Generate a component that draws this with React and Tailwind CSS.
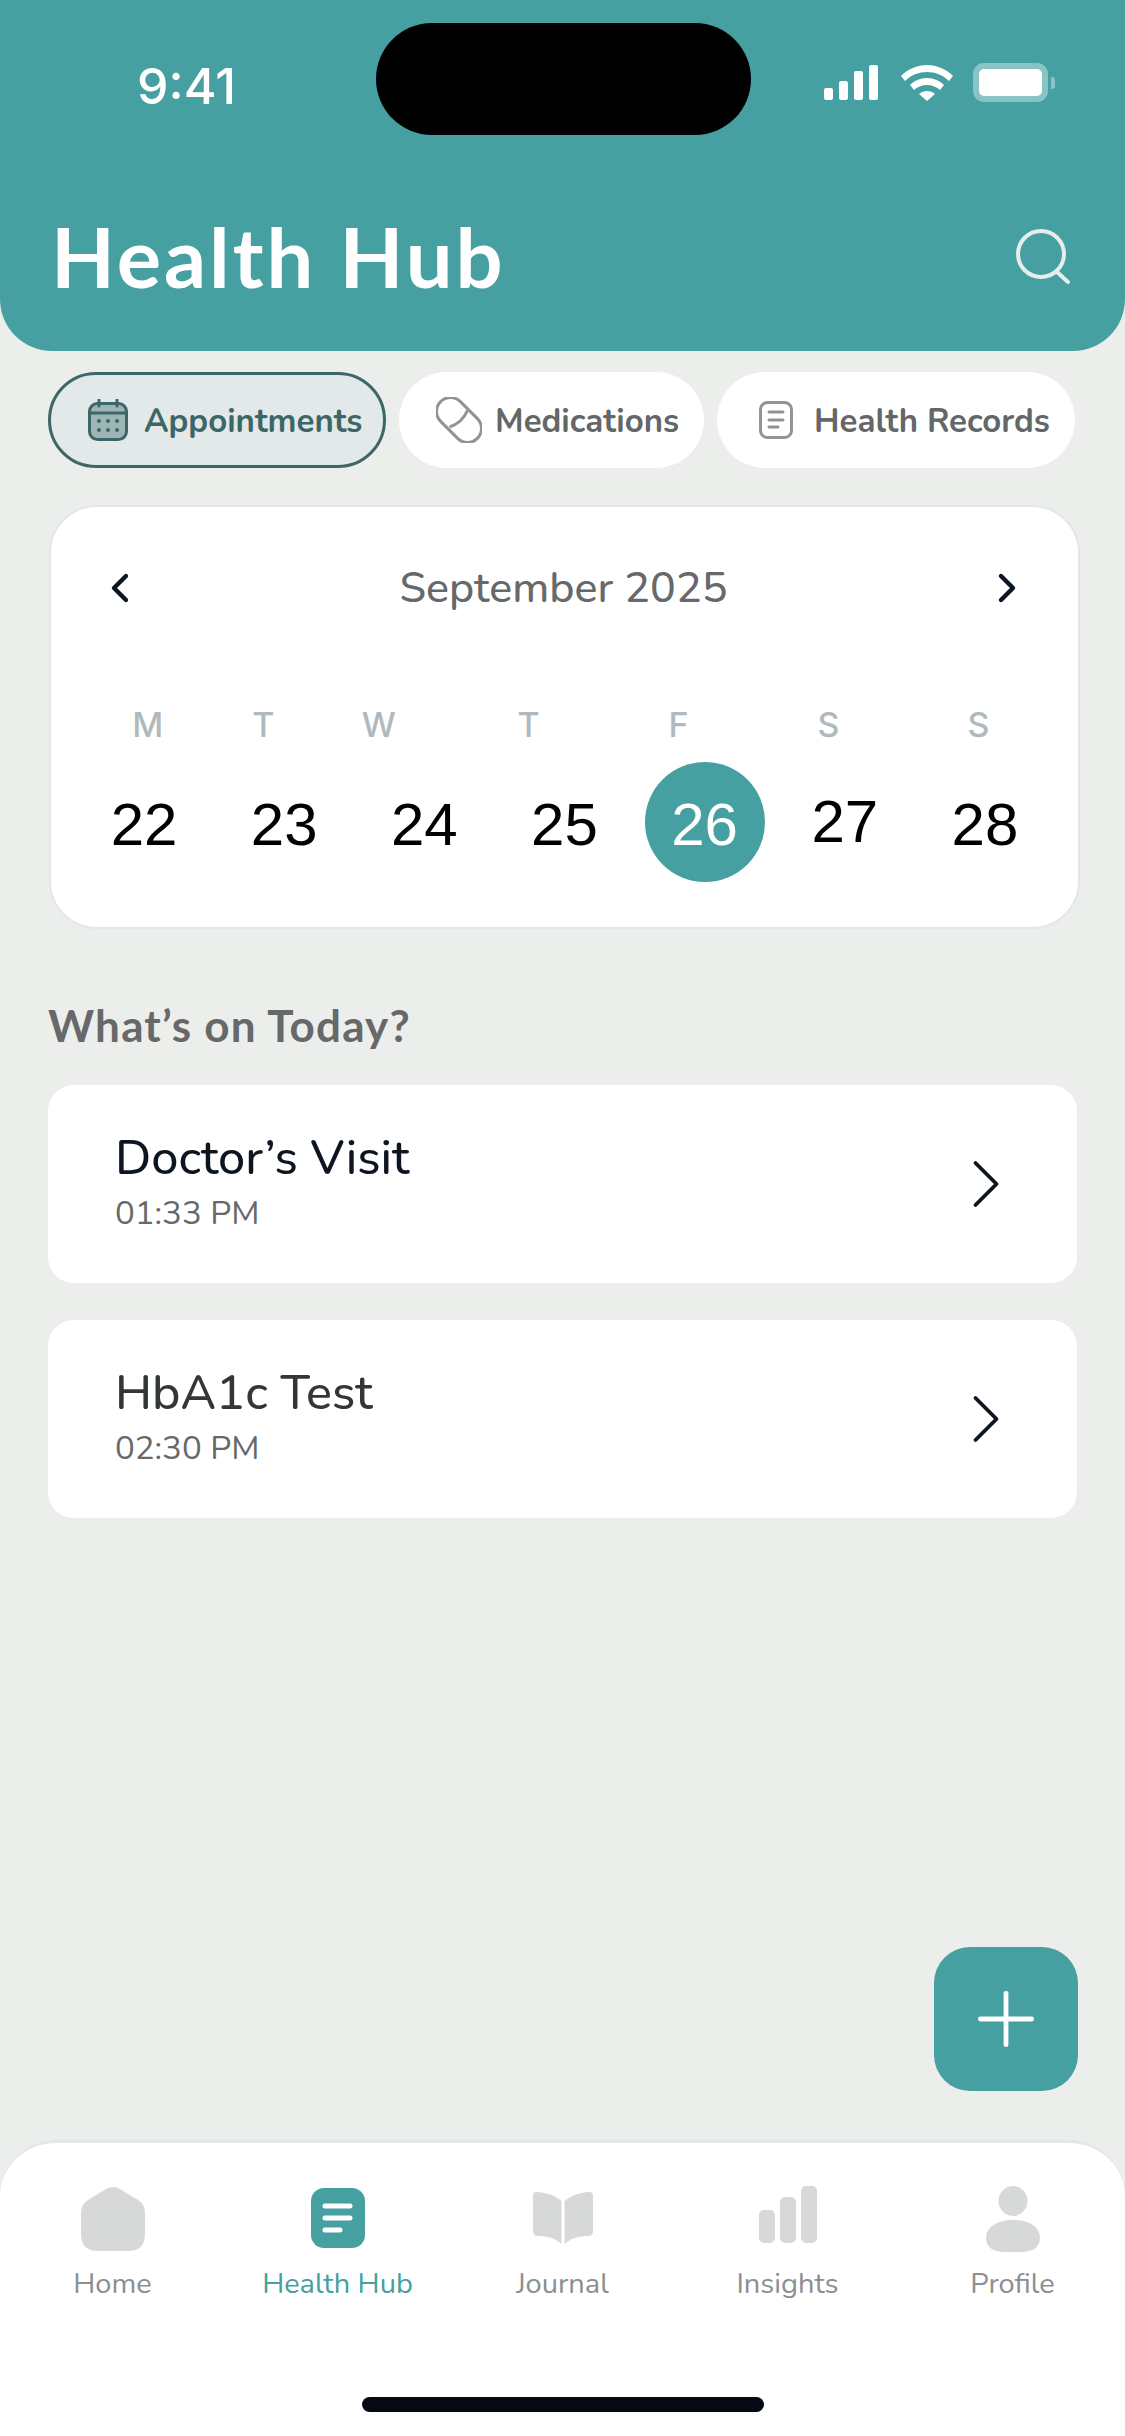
import { ChevronLeft, ChevronRight, Plus } from 'lucide-react';

const NUNITO = "font-['Nunito','Lato','Noto_Sans',sans-serif]";

const tabs = [
  { label: 'Appointments', icon: CalendarIcon, active: true, cls: 'w-[338px] pl-[37px] gap-[16px]' },
  { label: 'Medications', icon: PillIcon, cls: 'w-[305px] pl-[37px] gap-[13px]' },
  { label: 'Health Records', icon: RecordIcon, cls: 'w-[358px] pl-[42px] gap-[21px]' },
];

const dates = [22, 23, 24, 25, 26, 27, 28];

const visits = [
  { title: 'Doctor’s Visit', time: '01:33 PM', color: 'text-[#0d1620]' },
  { title: 'HbA1c Test', time: '02:30 PM', color: 'text-[#333637]' },
];

const nav = [
  { label: 'Home', icon: HomeIcon },
  { label: 'Health Hub', icon: HubIcon, active: true },
  { label: 'Journal', icon: BookIcon },
  { label: 'Insights', icon: BarsIcon },
  { label: 'Profile', icon: UserIcon },
];

function CalendarIcon() {
  return (
    <svg width="40" height="42" viewBox="0 0 40 42" fill="none">
      <rect x="1.5" y="4.5" width="37" height="36" rx="8" fill="#9db5b5" stroke="#3d6767" strokeWidth="3" />
      <path d="M2 14h36" stroke="#3d6767" strokeWidth="3" />
      <path d="M11 1v6M29 1v6" stroke="#3d6767" strokeWidth="3" strokeLinecap="round" />
      <g fill="#3d6767">
        <circle cx="11" cy="22" r="2" /><circle cx="20" cy="22" r="2" /><circle cx="29" cy="22" r="2" />
        <circle cx="11" cy="31" r="2" /><circle cx="20" cy="31" r="2" /><circle cx="29" cy="31" r="2" />
      </g>
    </svg>
  );
}

function PillIcon() {
  return (
    <svg width="46" height="46" viewBox="0 0 46 46" fill="none" stroke="#8f9496" strokeWidth="3">
      <rect x="-3" y="9" width="52" height="28" rx="14" transform="rotate(45 23 23)" />
      <path d="M13.5 30Q26 26 31.5 13.5" />
    </svg>
  );
}

function RecordIcon() {
  return (
    <svg width="34" height="38" viewBox="0 0 34 38" fill="none" stroke="#8f9496" strokeWidth="3" strokeLinecap="round">
      <rect x="1.5" y="1.5" width="31" height="35" rx="7" />
      <path d="M10 11h14M10 19h14M10 26h9" />
    </svg>
  );
}

function HomeIcon() {
  return (
    <svg width="66" height="66" viewBox="0 0 66 66" fill="#d7d9d9">
      <path d="M26 3 Q33 -1 40 3 L58 14 Q65 18 65 27 V48 Q65 65 48 65 H18 Q1 65 1 48 V27 Q1 18 8 14 Z" />
    </svg>
  );
}

function HubIcon() {
  return (
    <svg className="mt-[2px]" width="54" height="60" viewBox="0 0 54 60">
      <rect width="54" height="60" rx="13" fill="#469fa1" />
      <path d="M14 18h25M14 30h25M14 42h15" stroke="#fff" strokeWidth="5" strokeLinecap="round" />
    </svg>
  );
}

function BookIcon() {
  return (
    <svg className="mt-[5px]" width="60" height="54" viewBox="0 0 60 54" fill="#d7d9d9">
      <path d="M28.5 10 V53 C22 47 14 45 5 45 Q0 45 0 40 V5 Q0 0 5 1 C15 2 23 5 28.5 10 Z" />
      <path d="M31.5 10 V53 C38 47 46 45 55 45 Q60 45 60 40 V5 Q60 0 55 1 C45 2 37 5 31.5 10 Z" />
    </svg>
  );
}

function BarsIcon() {
  return (
    <svg width="58" height="57" viewBox="0 0 58 57" fill="#d7d9d9">
      <rect x="0" y="24" width="16" height="33" rx="5" />
      <rect x="21" y="11" width="16" height="46" rx="5" />
      <rect x="42" y="0" width="16" height="57" rx="5" />
    </svg>
  );
}

function UserIcon() {
  return (
    <svg width="54" height="66" viewBox="0 0 54 66" fill="#d7d9d9">
      <ellipse cx="27" cy="15" rx="14.5" ry="15" />
      <path d="M27 34 C43 34 54 41 54 52 C54 61 47 66 35 66 H19 C7 66 0 61 0 52 C0 41 11 34 27 34 Z" />
    </svg>
  );
}

function StatusBar() {
  return (
    <div className="relative h-[135px] shrink-0">
      <div className="absolute left-[376px] top-[23px] h-[112px] w-[375px] rounded-[56px] bg-black" />
      <div className="flex h-full items-start justify-between pl-[137px] pr-[70px] pt-[57px]">
        <span className="font-['Inter',sans-serif] text-[50px] font-medium leading-[58px] text-white">9:41</span>
        <div className="flex items-center gap-[20px] pt-[6px]">
          <div className="flex items-center gap-[23px]">
            <div className="flex h-[35px] items-end gap-[6px]">
              <div className="h-[12px] w-[9px] rounded-[2px] bg-white" />
              <div className="h-[19px] w-[9px] rounded-[2px] bg-white" />
              <div className="h-[29px] w-[9px] rounded-[2px] bg-white" />
              <div className="h-[35px] w-[9px] rounded-[2px] bg-white" />
            </div>
            <svg width="52" height="36" viewBox="0 0 52 36" fill="#fff">
              <path d="M26 0C16 0 7 4 0 11l4 5c6-6 14-9 22-9s16 3 22 9l4-5C45 4 36 0 26 0Z" />
              <path d="M26 13c-7 0-13 3-17 7l4 5c3-3 8-5 13-5s10 2 13 5l4-5c-4-4-10-7-17-7Z" />
              <path d="M26 26c-3 0-6 1-8 3l8 7 8-7c-2-2-5-3-8-3Z" />
            </svg>
          </div>
          <div className="flex items-center gap-[3px]">
            <div className="h-[39px] w-[75px] rounded-[11px] border-[6px] border-[#8ac3c4] bg-white" />
            <div className="h-[12px] w-[4px] rounded-r-[3px] bg-[#8ac3c4]" />
          </div>
        </div>
      </div>
    </div>
  );
}

export default function App() {
  return (
    <div className={`relative flex h-[2436px] w-[1125px] flex-col overflow-hidden bg-[#eceeec] ${NUNITO}`}>
      <header className="flex h-[351px] shrink-0 flex-col rounded-b-[52px] bg-[#469fa1]">
        <StatusBar />
        <div className="flex items-center justify-between pl-[51px] pr-[55px] pt-[71px]">
          <h1 className="font-['Lato',sans-serif] text-[83px] font-bold leading-[100px] tracking-[3px] text-white">Health Hub</h1>
          <svg width="54" height="56" viewBox="0 0 54 56" fill="none" stroke="#e6eded" strokeWidth="4" strokeLinecap="round">
            <circle cx="25" cy="26" r="23" />
            <path d="M41 44l11 10" />
          </svg>
        </div>
      </header>

      <div className="ml-[48px] mt-[21px] flex gap-[13px]">
        {tabs.map((t) => (
          <div key={t.label} className={`flex h-[96px] items-center rounded-[48px] text-[33px] font-bold ${t.cls} ${t.active ? 'border-[3px] border-[#3d6767] bg-[#e3e8e8] text-[#3d6767]' : 'bg-white text-[#646768]'}`}>
            <t.icon />
            <span className="pt-[4px]">{t.label}</span>
          </div>
        ))}
      </div>

      <section className="ml-[49px] mt-[37px] h-[424px] w-[1031px] rounded-[48px] border-2 border-[#e3e7e7] bg-white">
        <div className="flex items-center justify-between pl-[45px] pr-[47px] pt-[57px]">
          <ChevronLeft size={48} strokeWidth={2.2} color="#0d1620" />
          <span className="text-[43px] font-medium leading-[40px] text-[#666869]">September 2025</span>
          <ChevronRight size={48} strokeWidth={2.2} color="#0d1620" />
        </div>
        <div className="ml-[39px] mt-[93px] flex font-['Inter',sans-serif] text-[34px] font-medium leading-[40px] text-[#b0b9bd]">
          <div className="flex">
            {['M', 'T', 'W'].map((d, i) => <span key={i} className="w-[115.5px] text-center">{d}</span>)}
          </div>
          <div className="ml-[17px] flex">
            {['T', 'F', 'S', 'S'].map((d, i) => <span key={i} className="w-[150px] text-center">{d}</span>)}
          </div>
        </div>
        <div className="ml-[23px] mt-[17px] grid w-[981px] grid-cols-7 font-['Liberation_Sans',sans-serif] text-[60px] leading-[72px] text-black">
          {dates.map((d) => (
            <div key={d} className="flex h-[120px] items-center justify-center">
              {d === 26 ? (
                <div className="flex h-[120px] w-[120px] items-center justify-center rounded-full bg-[#469fa1] pt-[6px] text-white">{d}</div>
              ) : (
                <span className={d === 27 ? '' : 'pt-[6px]'}>{d}</span>
              )}
            </div>
          ))}
        </div>
      </section>

      <h2 className="ml-[48px] mt-[71px] font-['Lato',sans-serif] text-[44px] font-bold leading-[50px] tracking-[1.2px] text-[#666869]">What’s on Today?</h2>

      <div className="ml-[48px] mt-[35px] flex w-[1029px] flex-col gap-[37px]">
        {visits.map((v) => (
          <div key={v.title} className="flex h-[198px] items-center justify-between rounded-[26px] bg-white pl-[67px] pr-[49px]">
            <div className="pb-[4px]">
              <div className={`text-[48.5px] font-medium leading-[56px] ${v.color}`}>{v.title}</div>
              <div className="mt-[8px] text-[33px] leading-[40px] text-[#666869]">{v.time}</div>
            </div>
            <ChevronRight size={84} strokeWidth={1.1} color="#0d1620" />
          </div>
        ))}
      </div>

      <button className="absolute left-[934px] top-[1947px] flex h-[144px] w-[144px] items-center justify-center rounded-[36px] bg-[#469fa1]">
        <Plus size={88} strokeWidth={1.3} color="#fff" />
      </button>

      <nav className="mt-auto h-[296px] shrink-0 rounded-t-[56px] border-t-[3px] border-[#e3e7e7] bg-white">
        <div className="grid h-[94px] grid-cols-5 pt-[43px]">
          {nav.map((n) => (
            <div key={n.label} className="flex flex-col items-center">
              <div className="flex h-[66px] items-start justify-center">
                <n.icon />
              </div>
              <span className={`mt-[14px] text-[29px] leading-[36px] ${n.active ? 'text-[#469fa1]' : 'text-[#8b8f91]'}`}>{n.label}</span>
            </div>
          ))}
        </div>
        <div className="mx-auto mt-[160px] h-[15px] w-[402px] rounded-full bg-[#060914]" />
      </nav>
    </div>
  );
}
